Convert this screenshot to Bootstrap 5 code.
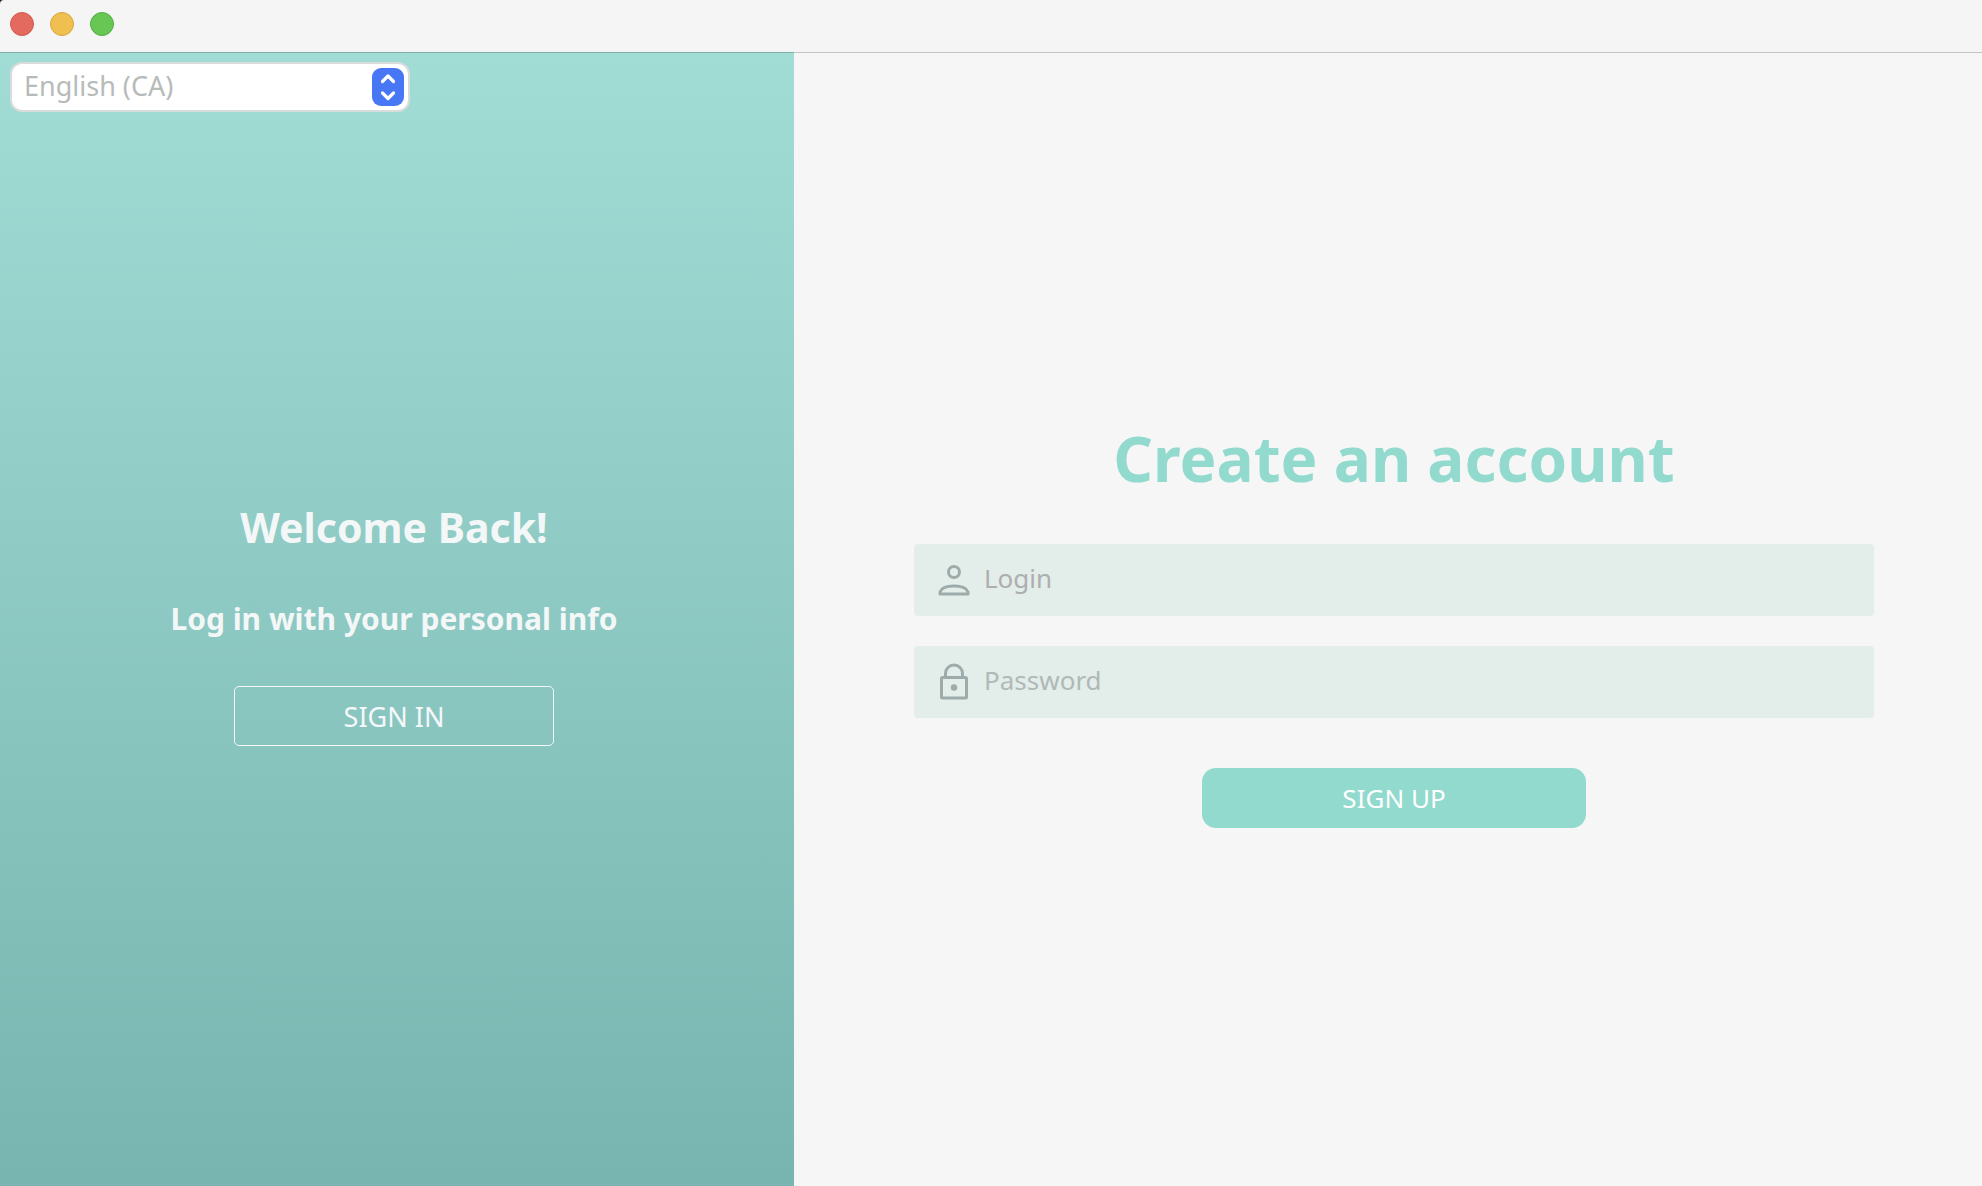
<!DOCTYPE html>
<html lang="en">
<head>
<meta charset="utf-8">
<meta name="viewport" content="width=device-width, initial-scale=1">
<title>Create an account</title>
<link rel="stylesheet" href="https://cdn.jsdelivr.net/npm/bootstrap@5.3.0/dist/css/bootstrap.min.css">
<style>
  body { font-family: "Noto Sans", "Open Sans", sans-serif; background: #1c2422; }
  .titlebar { height: 52px; padding: 0 10px 4px; gap: 16px; background: #f5f5f5; border-top-left-radius: 4px; }
  .light { width: 24px; height: 24px; padding: 0; border-radius: 50%; border: 1px solid; }
  .light-close { background: #e46a5f; border-color: #cf5b51; }
  .light-min { background: #efbf50; border-color: #d9a640; }
  .light-max { background: #67c654; border-color: #55ad44; }
  .split { display: grid; grid-template-columns: 397fr 594fr; }
  .split > * { border-top: 1px solid rgba(0, 0, 0, .2); }
  .side { background: linear-gradient(#a1dcd5, #79b5b0) border-box; color: #f4f7f7; padding: 9px 6px 59px 0; }
  .form-side { background: #f6f6f6; padding: 0 108px 0 120px; }
  .lang { display: grid; width: 400px; margin-left: 10px; }
  .lang > * { grid-area: 1 / 1; }
  .lang select { height: 50px; padding: 0 48px 2px 12px; font-size: 27px; line-height: 40px; color: #b7bbb9; border: 2px solid #d8dcda; border-radius: 12px; background: #fff; }
  .lang svg { justify-self: end; align-self: center; margin-right: 6px; pointer-events: none; }
  .welcome { font-size: 41px; line-height: 66px; }
  .hint { font-size: 30px; line-height: 40px; margin: 39px 0 47px; }
  .btn-signin { width: 320px; height: 60px; padding: 3px 0 0; font-size: 27px; line-height: 40px; color: #f4f8fa; border: 1px solid #f4f8fa; border-radius: 5px; }
  .headline { font-size: 62px; line-height: 94px; color: #92dace; margin-bottom: 39px; }
  .field { height: 72px; padding-left: 22px; gap: 12px; border-radius: 4px; background: #e3edea; }
  .field + .field { margin-top: 30px; }
  .field input { font-size: 26px; line-height: 40px; padding: 0 0 4px; }
  .field input::placeholder { color: #b0b9b7; opacity: 1; }
  .field #login::placeholder { color: #adafae; }
  .btn-signup { width: 384px; height: 60px; margin-top: 50px; padding: 0; font-size: 26px; line-height: 40px; color: #fff; background: #92dace; border: 0; border-radius: 14px; }
  .btn-signin:hover { color: #fff; border-color: #fff; }
  .btn-signup:hover { color: #fff; background: #84cfc2; }
</style>
</head>
<body>
<div class="d-flex flex-column min-vh-100">
  <header class="titlebar d-flex align-items-center">
    <button type="button" class="light light-close" aria-label="Close"></button>
    <button type="button" class="light light-min" aria-label="Minimize"></button>
    <button type="button" class="light light-max" aria-label="Zoom"></button>
  </header>
  <main class="split flex-grow-1">
    <section class="side d-flex flex-column">
      <div class="lang">
        <select class="form-select shadow-none" aria-label="Language">
          <option>English (CA)</option>
        </select>
        <svg width="32" height="38" viewBox="0 0 32 38" aria-hidden="true">
          <rect width="32" height="38" rx="9" fill="#4777f5"/>
          <path d="M10.500 13.500L16 8L21.500 13.500M10.500 25L16 30.500L21.500 25" fill="none" stroke="#fff" stroke-width="3.200" stroke-linecap="round" stroke-linejoin="round"/>
        </svg>
      </div>
      <div class="flex-grow-1 d-flex flex-column align-items-center justify-content-center text-center">
        <h2 class="welcome fw-bold m-0">Welcome Back!</h2>
        <p class="hint fw-bold">Log in with your personal info</p>
        <button type="button" class="btn btn-signin">SIGN IN</button>
      </div>
    </section>
    <section class="form-side d-flex flex-column justify-content-center">
      <h1 class="headline fw-bold text-center">Create an account</h1>
      <form class="d-flex flex-column">
        <div class="field d-flex align-items-center">
          <label for="login" class="d-flex" aria-label="Login">
            <svg width="36" height="38" viewBox="0 0 36 38" fill="none" stroke="#9dacaa" stroke-width="3" aria-hidden="true">
              <circle cx="18" cy="11" r="5.500"/>
              <path d="M4 33V31Q6 25 18 25Q30 25 32 31V33Z" stroke-linejoin="round"/>
            </svg>
          </label>
          <input id="login" type="text" class="form-control border-0 bg-transparent shadow-none" placeholder="Login">
        </div>
        <div class="field d-flex align-items-center">
          <label for="password" class="d-flex" aria-label="Password">
            <svg width="36" height="38" viewBox="0 0 36 38" fill="none" stroke="#9dacaa" stroke-width="3" aria-hidden="true">
              <rect x="5.500" y="14.500" width="25" height="20.500" rx="1"/>
              <path d="M9.500 14.500V10.500A8.500 8.500 0 0 1 26.500 10.500V14.500"/>
              <circle cx="18" cy="24.500" r="3.200" fill="#9dacaa" stroke="none"/>
            </svg>
          </label>
          <input id="password" type="password" class="form-control border-0 bg-transparent shadow-none" placeholder="Password">
        </div>
        <button type="submit" class="btn btn-signup align-self-center">SIGN UP</button>
      </form>
    </section>
  </main>
</div>
<script src="https://cdn.jsdelivr.net/npm/bootstrap@5.3.0/dist/js/bootstrap.bundle.min.js"></script>
</body>
</html>
